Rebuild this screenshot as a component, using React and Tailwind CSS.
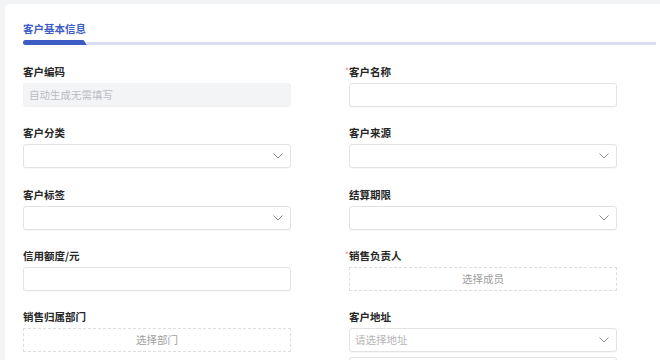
import React from "react";

const font = { fontFamily: '"Noto Sans CJK SC", "Noto Sans", sans-serif' };

function Chevron() {
  return (
    <svg width="10" height="6" viewBox="0 0 10 6" fill="none" className="shrink-0">
      <polyline points="0.5,0.5 5,5 9.5,0.5" stroke="#8a8a8a" strokeWidth="1" />
    </svg>
  );
}

function Label({ text, required }) {
  return (
    <div className="relative h-[16px] leading-[16px] text-[10.5px] font-bold text-[#262626]">
      {required && (
        <span className="absolute left-[-4px] top-[-1px] text-[8px] text-[#f56c6c] font-normal">*</span>
      )}
      {text}
    </div>
  );
}

function TextInput() {
  return <div className="h-[24px] rounded-[3px] border border-[#e3e3e3] bg-white shadow-[0_1px_1px_rgba(0,0,0,0.03)]" />;
}

function DisabledInput({ placeholder }) {
  return (
    <div className="h-[24px] rounded-[3px] border border-[#f0f1f3] bg-[#f3f4f6] flex items-center px-[5px] text-[10.5px] text-[#b9bcc2]">
      {placeholder}
    </div>
  );
}

function Select({ placeholder }) {
  return (
    <div className="h-[24px] rounded-[3px] border border-[#e3e3e3] bg-white flex items-center justify-between pl-[5px] pr-[7px] text-[10.5px] text-[#b5b5b5] shadow-[0_1px_1px_rgba(0,0,0,0.03)]">
      <span>{placeholder || ""}</span>
      <Chevron />
    </div>
  );
}

function Picker({ text }) {
  return (
    <div className="h-[24px] border border-dashed border-[#dedede] bg-white flex items-center justify-center text-[10.5px] text-[#9e9e9e]">
      {text}
    </div>
  );
}

function Field({ label, required, children }) {
  return (
    <div className="flex flex-col gap-[3px]">
      <Label text={label} required={required} />
      {children}
    </div>
  );
}

export default function App() {
  return (
    <div className="w-[660px] h-[360px] overflow-hidden bg-[#f3f4f6] pl-[5px] pt-[4px]" style={font}>
      <div className="h-full bg-white rounded-tl-[4px] pl-[18px] pr-[4px]">
        <div className="pt-[18px]">
          <div className="text-[10.5px] font-bold text-[#3d5cc4] leading-[14px]">客户基本信息</div>
          <div className="flex items-end mt-[4px] h-[5px]">
            <svg width="64" height="5" viewBox="0 0 64 5" className="shrink-0 block">
              <path d="M2.5 0 H60.5 L64 5 H2.5 A2.5 2.5 0 0 1 2.5 0 Z" fill="#3d5cc4" />
            </svg>
            <div className="flex-1 h-[3px] bg-[#d8ddf1]" />
          </div>
        </div>
        <div className="mt-[19px] grid grid-cols-[268px_268px] gap-x-[58px] gap-y-[18.25px]">
          <Field label="客户编码">
            <DisabledInput placeholder="自动生成无需填写" />
          </Field>
          <Field label="客户名称" required>
            <TextInput />
          </Field>
          <Field label="客户分类">
            <Select />
          </Field>
          <Field label="客户来源">
            <Select />
          </Field>
          <Field label="客户标签">
            <Select />
          </Field>
          <Field label="结算期限">
            <Select />
          </Field>
          <Field label="信用额度/元">
            <TextInput />
          </Field>
          <Field label="销售负责人" required>
            <Picker text="选择成员" />
          </Field>
          <Field label="销售归属部门">
            <Picker text="选择部门" />
          </Field>
          <Field label="客户地址">
            <Select placeholder="请选择地址" />
            <div className="mt-[2px]">
              <TextInput />
            </div>
          </Field>
        </div>
      </div>
    </div>
  );
}
